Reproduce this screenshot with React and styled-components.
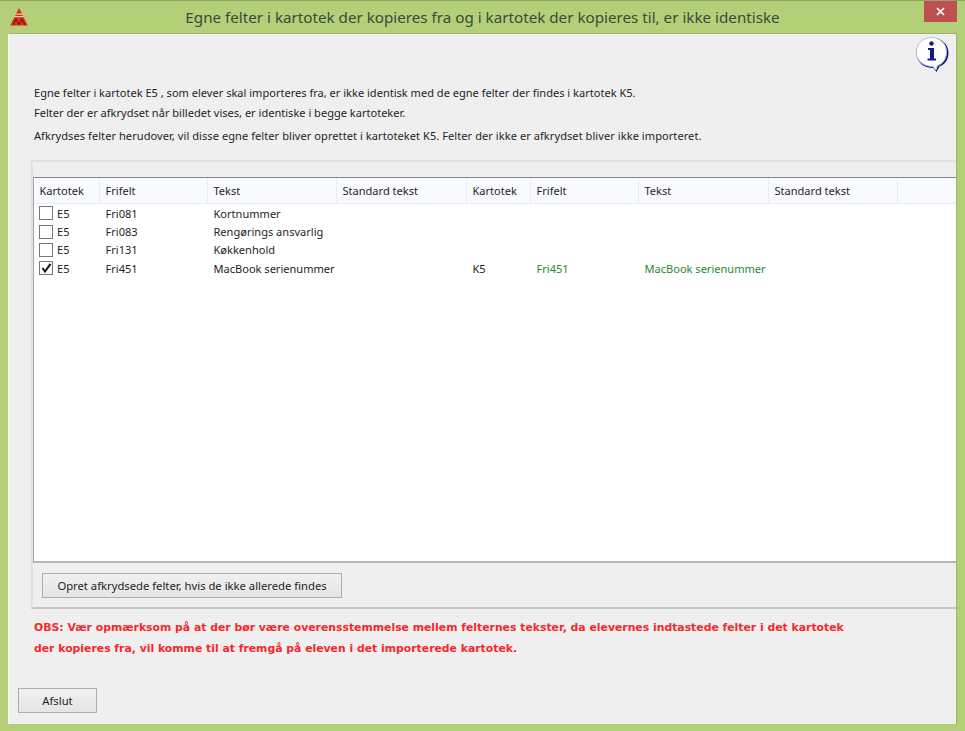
import React from "react";
import styled, { createGlobalStyle } from "styled-components";

const GlobalStyle = createGlobalStyle`
  html, body {
    margin: 0;
    padding: 0;
    background: #b3cf78;
  }
`;

const columns = "66px 108px 129px 130px 64px 108px 130px 129px 1fr";

const rows = [
  { file: "E5", field: "Fri081", text: "Kortnummer" },
  { file: "E5", field: "Fri083", text: "Rengørings ansvarlig" },
  { file: "E5", field: "Fri131", text: "Køkkenhold" },
  {
    file: "E5",
    field: "Fri451",
    text: "MacBook serienummer",
    checked: true,
    target: { file: "K5", field: "Fri451", text: "MacBook serienummer" },
  },
];

const Logo = () => (
  <svg width="18" height="18" viewBox="0 0 18 18">
    <path d="M9 0 L17.8 17.5 H0.2 Z" fill="#e32a1c" />
    <path d="M5.6 6.2 H12.4 M4.4 8.6 H13.6" stroke="#efe9c8" strokeWidth="1" />
    <path d="M3 16.8 L6 11 L9 16.8 L12 11 L15 16.8" fill="none" stroke="#4a1c10" strokeWidth="1" />
  </svg>
);

const InfoIcon = () => (
  <svg width="35" height="36" viewBox="0 0 34 36">
    <path
      d="M17 1 C26 1 33 7 33 16 C33 24 28 28 24 29.5 L21 35 L18 31 C8 31 1 25 1 16 C1 7 8 1 17 1 Z"
      fill="#14149c"
    />
    <path
      d="M16 0.5 C24 0.5 31 6 31 15 C31 23 26 27.5 22 28.5 L20.5 33 L17.5 29.5 C8 29.5 0.8 24 0.8 15 C0.8 6 8 0.5 16 0.5 Z"
      fill="#ffffff"
      stroke="#b9bcc2"
      strokeWidth="1"
    />
    <circle cx="16" cy="6.5" r="2.2" fill="#141a8c" />
    <path d="M12.5 11 H18.5 V21.5 H20.5 V23.5 H12 V21.5 H14.5 V13 H12.5 Z" fill="#141a8c" />
  </svg>
);

const App = () => (
  <>
    <GlobalStyle />
    <Window>
      <TitleBar>
        <LogoSlot>
          <Logo />
        </LogoSlot>
        <Title>Egne felter i kartotek der kopieres fra og i kartotek der kopieres til, er ikke identiske</Title>
        <CloseButton>
          <svg width="9" height="9" viewBox="0 0 9 9">
            <path d="M1 1 L8 8 M8 1 L1 8" stroke="#fff" strokeWidth="1.7" />
          </svg>
        </CloseButton>
      </TitleBar>
      <Client>
        <InfoRow>
          <InfoIcon />
        </InfoRow>
        <Intro>
          <IntroLine>Egne felter i kartotek E5 , som elever skal importeres fra, er ikke identisk med de egne felter der findes i kartotek K5.</IntroLine>
          <IntroLine>Felter der er afkrydset når billedet vises, er identiske i begge kartoteker.</IntroLine>
          <IntroLine $gap>Afkrydses felter herudover, vil disse egne felter bliver oprettet i kartoteket K5. Felter der ikke er afkrydset bliver ikke importeret.</IntroLine>
        </Intro>
        <Panel>
          <Table>
            <HeaderRow>
              {["Kartotek", "Frifelt", "Tekst", "Standard tekst", "Kartotek", "Frifelt", "Tekst", "Standard tekst", ""].map((label, i) => (
                <HeaderCell key={i}>{label}</HeaderCell>
              ))}
            </HeaderRow>
            <Body>
              {rows.map((row) => (
                <Row key={row.field}>
                  <FileCell>
                    <CheckBox>
                      {row.checked && (
                        <svg width="11" height="10" viewBox="0 0 11 10">
                          <path d="M1.5 5 L4 8.5 L9.5 0.8" fill="none" stroke="#111" strokeWidth="2" />
                        </svg>
                      )}
                    </CheckBox>
                    {row.file}
                  </FileCell>
                  <Cell>{row.field}</Cell>
                  <Cell>{row.text}</Cell>
                  <Cell />
                  <Cell>{row.target?.file}</Cell>
                  <Cell $match>{row.target?.field}</Cell>
                  <Cell $match>{row.target?.text}</Cell>
                </Row>
              ))}
            </Body>
          </Table>
          <PanelFooter>
            <Button $wide>Opret afkrydsede felter, hvis de ikke allerede findes</Button>
          </PanelFooter>
        </Panel>
        <Warning>
          OBS: Vær opmærksom på at der bør være overensstemmelse mellem felternes tekster, da elevernes indtastede felter i det kartotek
          <br />
          der kopieres fra, vil komme til at fremgå på eleven i det importerede kartotek.
        </Warning>
        <Footer>
          <Button>Afslut</Button>
        </Footer>
      </Client>
    </Window>
  </>
);

const Window = styled.div`
  width: 965px;
  height: 731px;
  box-sizing: border-box;
  border-top: 1px solid #8fa862;
  padding: 0 8px 7px 8px;
  display: flex;
  flex-direction: column;
  background: #b3cf78;
  font-family: "Noto Sans", "Liberation Sans", sans-serif;
  font-size: 11.05px;
  color: #1e1e1e;
  overflow: hidden;
`;

const TitleBar = styled.div`
  height: 32px;
  flex: none;
  display: flex;
  align-items: flex-start;
`;

const LogoSlot = styled.div`
  width: 40px;
  padding: 7px 0 0 2px;
  flex: none;
`;

const Title = styled.div`
  flex: 1;
  text-align: center;
  padding: 6px 9px 0 0;
  font-size: 15.2px;
  line-height: 21px;
  color: #3d4a3a;
  white-space: nowrap;
`;

const CloseButton = styled.div`
  width: 33px;
  height: 21px;
  flex: none;
  background: #bd5152;
  display: flex;
  align-items: center;
  justify-content: center;
`;

const Client = styled.div`
  flex: 1;
  min-height: 0;
  display: flex;
  flex-direction: column;
  background: #efefef;
  border-top: 1px solid #9cb56b;
  border-left: 1px solid #f7f7f7;
  border-right: 1px solid #9cb56b;
`;

const InfoRow = styled.div`
  height: 38px;
  flex: none;
  display: flex;
  justify-content: flex-end;
  padding: 3px 6px 0 0;
`;

const Intro = styled.div`
  margin: 8px 0 0 25px;
  height: 77px;
  flex: none;
`;

const IntroLine = styled.div`
  height: 20px;
  line-height: 20px;
  white-space: nowrap;
  margin-top: ${(p) => (p.$gap ? "3px" : "0")};
  letter-spacing: ${(p) => (p.$gap ? "0.06px" : "0")};
`;

const Panel = styled.div`
  height: 449px;
  flex: none;
  margin-left: 22px;
  box-sizing: border-box;
  border-top: 2px solid #e2e2e2;
  border-left: 2px solid #e2e2e2;
  border-bottom: 2px solid #c4c4c4;
  padding-top: 15px;
  display: flex;
  flex-direction: column;
`;

const Table = styled.div`
  height: 386px;
  flex: none;
  box-sizing: border-box;
  background: #fff;
  border-top: 1px solid #85878e;
  border-left: 1px solid #a5a7ad;
  border-bottom: 2px solid #b5b7bd;
  display: flex;
  flex-direction: column;
`;

const HeaderRow = styled.div`
  height: 25px;
  flex: none;
  display: grid;
  grid-template-columns: ${columns};
  background: #f9fafd;
  border-bottom: 1px solid #e6ecf5;
`;

const HeaderCell = styled.div`
  padding-left: 5.5px;
  line-height: 25px;
  border-right: 1px solid #e6ecf5;
  white-space: nowrap;
  &:last-child {
    border-right: none;
  }
`;

const Body = styled.div`
  padding-top: 0;
`;

const Row = styled.div`
  height: 18.4px;
  display: grid;
  grid-template-columns: ${columns};
  align-items: center;
`;

const Cell = styled.div`
  padding-left: 5.5px;
  white-space: nowrap;
  color: ${(p) => (p.$match ? "#1f8a2c" : "#1e1e1e")};
`;

const FileCell = styled(Cell)`
  display: flex;
  align-items: center;
  gap: 4px;
  padding-left: 5px;
`;

const CheckBox = styled.span`
  width: 12px;
  height: 12px;
  flex: none;
  background: #fff;
  border: 1px solid #777;
  display: flex;
  align-items: center;
  justify-content: center;
`;

const PanelFooter = styled.div`
  padding: 10px 0 0 9px;
`;

const Button = styled.div`
  width: ${(p) => (p.$wide ? "300px" : "79px")};
  height: 25px;
  box-sizing: border-box;
  border: 1px solid #adadad;
  background: linear-gradient(#f0f0f0, #e5e5e5);
  text-align: center;
  font-size: 11.25px;
  line-height: 23px;
  white-space: nowrap;
`;

const Warning = styled.div`
  margin: 8px 0 0 25px;
  height: 71px;
  flex: none;
  font-family: "DejaVu Sans", sans-serif;
  font-weight: bold;
  font-size: 10.85px;
  line-height: 21px;
  color: #f5282c;
  white-space: nowrap;
`;

const Footer = styled.div`
  padding-left: 9px;
`;

export default App;
